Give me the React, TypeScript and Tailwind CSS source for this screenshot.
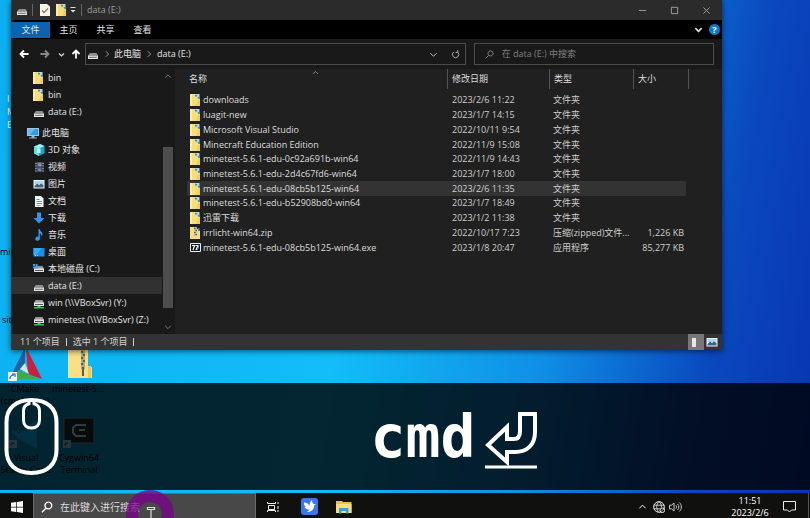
import React from "react";

type IconProps = { className?: string };

const Drive = ({ net, sys }: { net?: boolean; sys?: boolean }) => (
  <svg viewBox="0 0 12 12" className="h-3 w-3 shrink-0" aria-hidden="true">
    {net || sys ? (
      <>
        <path d="M2.5 3h7L11 6H1z" fill="#9a9a9a" />
        <path d="M1 5.5h10V9H1z" fill="#e4e4e4" />
        <path d="M2 7h8v1H2z" fill="#555" />
        {net && <path d="M4.5 9h3v1H11v1.5H1V10h3.5z" fill="#3fc451" />}
        {sys && <path d="M0 1h2v2H0zM2.6 1h2v2h-2zM0 3.6h2v2H0zM2.6 3.6h2v2h-2z" fill="#2ba9f0" />}
      </>
    ) : (
      <>
        <path d="M3 5h6.5L11 7.5H1z" fill="#8d8d8d" />
        <path d="M1 7.5h10V11H1z" fill="#e6e6e6" />
        <path d="M2 8.8h8v1H2z" fill="#666" />
        <path d="M9 9h1.3v1H9z" fill="#36d05a" />
      </>
    )}
  </svg>
);

const Folder = ({ className = "h-3 w-[10px]" }: IconProps) => (
  <svg viewBox="0 0 10 12" className={`${className} shrink-0`} aria-hidden="true">
    <path d="M0 0h5l5 4v8H0z" fill="#f7de7c" />
    <path d="M0 0h2v12H0z" fill="#fdeea5" />
    <path d="M5 0h4.5v4H8z" fill="#b9d6e2" />
    <path d="M5 1h2v1.5H5zM7.5 3H10v2H8.500z" fill="#3d8fb8" />
    <path d="M8 6h2v6H6z" fill="#f0cf62" />
  </svg>
);

const ZipFile = () => (
  <svg viewBox="0 0 10 12" className="h-3 w-[10px] shrink-0" aria-hidden="true">
    <path d="M0 0h5l5 4v8H0z" fill="#f7de7c" />
    <path d="M4 0h3v9H4z" fill="#b9b9b0" />
    <path d="M4 1h1.500v1H4zM5.500 3H7v1H5.500zM4 5h1.500v1H4zM5.500 7H7v1H5.500z" fill="#555" />
    <path d="M8 1h1.500v3H8z" fill="#3d8fb8" />
  </svg>
);

const ExeFile = () => (
  <svg viewBox="0 0 11 9" className="h-[9px] w-[11px] shrink-0" aria-hidden="true">
    <path d="M.5.500h10v8H.5z" fill="#171717" stroke="#eee" />
    <path d="M2 2.500h2.500L3 7M5.500 2.500H8L6 7" fill="none" stroke="#fff" strokeWidth="1.200" />
    <path d="m9 2-1.500 5" stroke="#4a9fe0" />
  </svg>
);

const Computer = () => (
  <svg viewBox="0 0 12 12" className="h-3 w-3 shrink-0" aria-hidden="true">
    <path d="M0 1h12v8H0z" fill="#9fc6dc" />
    <path d="M1 2h10v6H1z" fill="#2f9de4" />
    <path d="M1 2h7L3 8H1z" fill="#61bdf2" />
    <path d="M4.500 9h3v1.500H10v1H2v-1h2.500z" fill="#8fb3c8" />
  </svg>
);

const Cube = () => (
  <svg viewBox="0 0 12 12" className="h-3 w-3 shrink-0" aria-hidden="true">
    <path d="M1 2.500 7 0l4.500 2v7L6 12 1 9.500z" fill="#1aa6c9" />
    <path d="M1 2.500 6 4.500V12L1 9.500z" fill="#5be0e8" />
    <path d="M1 2.500 7 0l4.500 2L6 4.500z" fill="#9af0f4" />
    <path d="M4 4.500h3.500V9H4z" fill="#d5f8fa" />
  </svg>
);

const Video = () => (
  <svg viewBox="0 0 12 12" className="h-3 w-3 shrink-0" aria-hidden="true">
    <path d="M2 1h9v10H2z" fill="#3b3b3b" />
    <path d="M2.500 2h1v1h-1zM2.500 4.500h1v1h-1zM2.500 7h1v1h-1zM2.500 9.500h1v1h-1zM9.500 2h1v1h-1zM9.500 4.500h1v1h-1zM9.500 7h1v1h-1zM9.500 9.500h1v1h-1z" fill="#ccc" />
    <path d="M4.500 1.500h4v4h-4z" fill="#6b83c4" />
    <path d="M4.500 6.500h4v4h-4z" fill="#3e6fd0" />
    <path d="m5 5 2-2 1.500 2zM5 9l2-1 1 2z" fill="#d09a5c" />
  </svg>
);

const Picture = () => (
  <svg viewBox="0 0 12 12" className="h-3 w-3 shrink-0" aria-hidden="true">
    <path d="M.5 2h11v8.500H.5z" fill="#f1f5f8" />
    <path d="M1.500 3h9v3h-9z" fill="#a8d8f4" />
    <path d="M1.500 8 4 5.500 6 7l2-1.500L10.500 7v2.500h-9z" fill="#3a6680" />
  </svg>
);

const Doc = () => (
  <svg viewBox="0 0 12 12" className="h-3 w-3 shrink-0" aria-hidden="true">
    <path d="M2 1h6l2.500 2.500V12H2z" fill="#f3f6f8" />
    <path d="M3.500 4h3v1h-3zM3.500 6h5.500v1H3.500zM3.500 8h5.500v1H3.500zM3.500 10h4v.8h-4z" fill="#4b9cc8" />
  </svg>
);

const Download = () => (
  <svg viewBox="0 0 12 12" className="h-3 w-3 shrink-0" aria-hidden="true">
    <path d="M4 .5h4V6h3.500L6 11.500.5 6H4z" fill="#3492ef" />
  </svg>
);

const Music = () => (
  <svg viewBox="0 0 12 12" className="h-3 w-3 shrink-0" aria-hidden="true">
    <path d="M5.500 0h1.200c.3 2.500 3 3 2.800 5.500-.1 1-.5 1.500-1 2 .3-2-.5-2.700-1.600-3V9.500a2.300 2 0 1 1-1.400-1.700z" fill="#2b9cf2" />
  </svg>
);

const DesktopIcon = () => (
  <svg viewBox="0 0 12 12" className="h-3 w-3 shrink-0" aria-hidden="true">
    <path d="M.5 2h11v8.500H.5z" fill="#1b8fe8" />
    <path d="M.5 2h8l-5 7h-3z" fill="#35a8f5" />
    <path d="M2 9h1v.8H2zM4 9h1v.8H4z" fill="#cfe9fb" />
  </svg>
);

type ChevronProps = { d: string; className?: string; bold?: boolean };
const Stroke = ({ d, className = "h-[9px] w-[9px]", bold }: ChevronProps) => (
  <svg viewBox="0 0 10 10" className={`${className} shrink-0`} fill="none" stroke="currentColor" strokeWidth={bold ? 1.8 : 1.1} aria-hidden="true">
    <path d={d} />
  </svg>
);

const UP = "M1.500 7 5 3.500 8.500 7";
const DOWN = "M1.500 3.500 5 7l3.500-3.500";
const RIGHT = "M3.500 1.500 7 5 3.500 8.500";

const quickAccess = [
  { label: "bin", icon: <Folder /> },
  { label: "bin", icon: <Folder /> },
  { label: "data (E:)", icon: <Drive /> },
];

const places = [
  { label: "3D 对象", icon: <Cube /> },
  { label: "视频", icon: <Video /> },
  { label: "图片", icon: <Picture /> },
  { label: "文档", icon: <Doc /> },
  { label: "下载", icon: <Download /> },
  { label: "音乐", icon: <Music /> },
  { label: "桌面", icon: <DesktopIcon /> },
  { label: "本地磁盘 (C:)", icon: <Drive sys /> },
  { label: "data (E:)", icon: <Drive />, active: true },
  { label: "win (\\\\VBoxSvr) (Y:)", icon: <Drive net /> },
  { label: "minetest (\\\\VBoxSvr) (Z:)", icon: <Drive net /> },
];

const files = [
  ["downloads", "2023/2/6 11:22", "文件夹", ""],
  ["luagit-new", "2023/1/7 14:15", "文件夹", ""],
  ["Microsoft Visual Studio", "2022/10/11 9:54", "文件夹", ""],
  ["Minecraft Education Edition", "2022/11/9 15:08", "文件夹", ""],
  ["minetest-5.6.1-edu-0c92a691b-win64", "2022/11/9 14:43", "文件夹", ""],
  ["minetest-5.6.1-edu-2d4c67fd6-win64", "2023/1/7 18:00", "文件夹", ""],
  ["minetest-5.6.1-edu-08cb5b125-win64", "2023/2/6 11:35", "文件夹", ""],
  ["minetest-5.6.1-edu-b52908bd0-win64", "2023/1/7 18:49", "文件夹", ""],
  ["迅雷下载", "2023/1/2 11:38", "文件夹", ""],
  ["irrlicht-win64.zip", "2022/10/17 7:23", "压缩(zipped)文件...", "1,226 KB"],
  ["minetest-5.6.1-edu-08cb5b125-win64.exe", "2023/1/8 20:47", "应用程序", "85,277 KB"],
];

const fileIcon = (name: string) =>
  name.endsWith(".zip") ? <ZipFile /> : name.endsWith(".exe") ? <ExeFile /> : <Folder />;

function TitleBar() {
  return (
    <header className="flex h-5 items-center bg-[#2b2b2b] pl-[5px] text-[#9b9b9b]">
      <Drive />
      <span className="ml-1 h-3 w-px bg-[#666]" />
      <button aria-label="属性" className="ml-[7px]">
        <svg viewBox="0 0 10 12" className="h-3 w-[10px]">
          <path d="M0 0h7l3 2.500V12H0z" fill="#f4f4ee" />
          <path d="m2 6.500 2 2 4-4" fill="none" stroke="#8d7d42" strokeWidth="1.300" />
        </svg>
      </button>
      <button aria-label="新建文件夹" className="ml-[6px]">
        <Folder />
      </button>
      <button aria-label="自定义快速访问工具栏" className="ml-[3px] text-[#ddd]">
        <svg viewBox="0 0 8 8" className="h-2 w-2">
          <path d="M1.500 1h5v1h-5zM1.500 4h5L4 6.500z" fill="currentColor" />
        </svg>
      </button>
      <span className="ml-1 h-3 w-px bg-[#666]" />
      <h1 className="ml-[5px]">data (E:)</h1>
      <div className="ml-auto flex">
        <button aria-label="最小化" className="flex w-8 justify-center">
          <Stroke d="M1 5h8" />
        </button>
        <button aria-label="最大化" className="flex w-8 justify-center">
          <Stroke d="M1.500 1.500h7v7h-7z" />
        </button>
        <button aria-label="关闭" className="flex w-8 justify-center">
          <Stroke d="m1.500 1.500 7 7M8.500 1.500l-7 7" />
        </button>
      </div>
    </header>
  );
}

function Ribbon() {
  return (
    <nav className="flex h-[19px] items-center bg-black text-[#e2e2e2]">
      <button className="h-4 w-[39px] bg-[#0d63ad]">文件</button>
      <button className="w-[37px]">主页</button>
      <button className="w-[37px]">共享</button>
      <button className="w-[37px]">查看</button>
      <button aria-label="展开功能区" className="ml-auto">
        <Stroke d={DOWN} bold />
      </button>
      <button aria-label="帮助" className="mr-[2px] ml-[6px] h-[11px] w-[11px] rounded-full bg-[#0f78cf] text-[9px] leading-[11px] font-bold text-white">
        ?
      </button>
    </nav>
  );
}

function AddressBar() {
  return (
    <div className="flex h-[30px] items-center bg-[#191919] pr-2">
      <button aria-label="后退" className="ml-2 text-white">
        <Stroke d="M9.500 5h-8M5 1.500 1.500 5 5 8.500" bold className="h-[10px] w-[10px]" />
      </button>
      <button aria-label="前进" className="ml-[11px] text-[#888]">
        <Stroke d="M.5 5h8M5 1.500 8.500 5 5 8.500" bold className="h-[10px] w-[10px]" />
      </button>
      <button aria-label="最近浏览的位置" className="ml-2 text-[#ddd]">
        <Stroke d={DOWN} bold className="h-[7px] w-[7px]" />
      </button>
      <button aria-label="上移" className="ml-[6px] text-white">
        <Stroke d="M5 9.500v-8M1.500 5 5 1.500 8.500 5" bold className="h-[10px] w-[10px]" />
      </button>
      <div className="ml-1 flex h-[22px] min-w-0 flex-[31] items-center border border-[#4b4b4b] pr-[5px] pl-px text-[#e4e4e4]">
        <Drive />
        <span className="mr-[3px] ml-1 flex text-[#aaa]">
          <Stroke d={RIGHT} className="h-2 w-2" />
        </span>
        <button>此电脑</button>
        <span className="mx-1 flex text-[#aaa]">
          <Stroke d={RIGHT} className="h-2 w-2" />
        </span>
        <button>data (E:)</button>
        <button aria-label="以前的位置" className="ml-auto text-[#bbb]">
          <Stroke d={DOWN} />
        </button>
        <button aria-label="刷新" className="ml-[13px] text-[#aaa]">
          <Stroke d="M7.500 2.500A3.500 3.500 0 1 1 3 2.200M7.500 0v2.700H5" />
        </button>
      </div>
      <label className="ml-2 flex h-[22px] min-w-0 flex-[19] items-center border border-[#4b4b4b] pl-[10px] text-[#8a8a8a]">
        <Stroke d="M6.200 1a2.800 2.800 0 1 1-.1 0M4.200 5.900.8 9.300" />
        <input aria-label="搜索" placeholder="在 data (E:) 中搜索" className="ml-2 min-w-0 flex-1 bg-transparent outline-none placeholder:text-[#808080]" />
      </label>
    </div>
  );
}

function Sidebar() {
  return (
    <aside className="flex w-[164px] shrink-0 bg-[#191919] text-[#e6e6e6]">
      <ul className="min-w-0 flex-1">
        {quickAccess.map((q, i) => (
          <li key={i} className="flex h-[17px] items-center pl-[22px]">
            <span className="flex w-[15px]">{q.icon}</span>
            {q.label}
          </li>
        ))}
        <li className="mt-1 flex h-[17px] items-center pl-4">
          <span className="flex w-[15px]">
            <Computer />
          </span>
          此电脑
        </li>
        {places.map((p) => (
          <li key={p.label} className={`flex h-[17px] items-center pl-[22px] ${p.active ? "bg-[#313131]" : ""}`}>
            <span className="flex w-[15px]">{p.icon}</span>
            <span className="whitespace-nowrap">{p.label}</span>
          </li>
        ))}
      </ul>
      <div className="mr-px flex w-3 flex-col items-center text-[#888]">
        <span className="flex h-[78px] items-start pt-[3px]">
          <Stroke d={UP} className="h-2 w-2" />
        </span>
        <span className="w-[10px] flex-1 bg-[#4d4d4d]" />
        <span className="flex h-[26px] items-end pb-[3px]">
          <Stroke d={DOWN} className="h-2 w-2" />
        </span>
      </div>
    </aside>
  );
}

function FileTable() {
  return (
    <main className="relative min-w-0 flex-1 bg-[#202020] pr-[33px] pl-3 text-[#dedede]">
      <span className="absolute top-0 left-[137px] text-[#aaa]">
        <Stroke d={UP} className="h-[7px] w-[7px]" />
      </span>
      <table className="h-[186px] w-full table-fixed border-collapse text-left whitespace-nowrap">
        <colgroup>
          <col />
          <col className="w-[102px]" />
          <col className="w-[84px]" />
          <col className="w-[53px]" />
          <col className="w-[3px]" />
        </colgroup>
        <thead>
          <tr className="h-6 align-top">
            {["名称", "修改日期", "类型", "大小"].map((h, i) => (
              <th key={h} className="p-0 font-normal">
                <div className={`h-5 leading-5 ${i === 0 ? "pl-[2px]" : "border-l border-[#555] pl-1"}`}>{h}</div>
              </th>
            ))}
            <td className="p-0">
              <div className="h-5 border-r border-[#555]" />
            </td>
          </tr>
        </thead>
        <tbody>
          {files.map(([name, date, type, size]) => {
            const cell = name.includes("08cb5b125-win64") && !name.endsWith(".exe") ? "bg-[#333] p-0" : "p-0";
            return (
              <tr key={name}>
                <td className={cell}>
                  <div className="flex items-center pl-[3px]">
                    <span className="flex w-[13px]">{fileIcon(name)}</span>
                    {name}
                  </div>
                </td>
                <td className={`${cell} text-[#cfcfcf]`}>
                  <div className="pl-[5px]">{date}</div>
                </td>
                <td className={`${cell} text-[#cfcfcf]`}>
                  <div className="pl-1">{type}</div>
                </td>
                <td className={`${cell} text-right text-[#cfcfcf]`}>
                  <div className="pr-[2px]">{size}</div>
                </td>
              </tr>
            );
          })}
        </tbody>
      </table>
    </main>
  );
}

function StatusBar() {
  return (
    <footer className="flex h-4 items-center bg-[#333] pl-[9px] text-[#d4d4d4]">
      <span>11 个项目</span>
      <span className="mx-[6px] h-2 w-px bg-[#ccc]" />
      <span>选中 1 个项目</span>
      <span className="mx-[6px] h-2 w-px bg-[#ccc]" />
      <button aria-label="详细信息" className="ml-auto flex h-4 w-4 items-center bg-[#777] pl-1">
        <span className="h-[9px] w-1 bg-[#e6e6e6]" />
      </button>
      <button aria-label="大图标" className="mr-1 ml-[2px] flex">
        <Picture />
      </button>
    </footer>
  );
}

function Desktop() {
  const label = "absolute text-center text-[9px] leading-3 text-black";
  return (
    <>
      <div className="absolute top-[92px] left-[7px] text-[9px] leading-[13px] text-white">
        I<br />M<br />E
      </div>
      <div className="absolute top-[245px] left-0 text-[9px] text-black">mi</div>
      <div className="absolute top-[313px] left-[2px] text-[9px] text-black">sit</div>
      <svg viewBox="0 0 34 36" className="absolute top-[345px] left-2 h-9 w-[34px]" aria-hidden="true">
        <path d="M17 2 2 33l15-13z" fill="#1c62a5" />
        <path d="M18 2 34 34 20 29z" fill="#c9203f" />
        <path d="m17 18 4 11-9-5z" fill="#d6e3ec" />
        <path d="m11 25 20 9H4z" fill="#3cac4c" />
        <path d="M0 27h9v9H0z" fill="#f5f5f5" />
        <path d="M2 34c0-3 2-4 4-4M4 29h3v3" fill="none" stroke="#1769b5" strokeWidth="1.200" />
      </svg>
      <svg viewBox="0 0 24 30" className="absolute top-[349px] left-[68px] h-[30px] w-6" aria-hidden="true">
        <path d="M0 0h20v18h4v11H0z" fill="#f9e084" />
        <path d="M20 17h3v12h-3z" fill="#e9c85c" />
        <path d="M13 0h4v20h-4z" fill="#aaa791" />
        <path d="M13 2h2v2h-2zM15 5h2v2h-2zM13 8h2v2h-2zM15 11h2v2h-2zM13 14h2v2h-2zM14 18h2v9h-2z" fill="#5c5c52" />
      </svg>
      <div className={`${label} top-[383px] left-0 w-[50px]`}>
        CMake
        <br />
        (cmake-gui)
      </div>
      <div className={`${label} top-[383px] left-[50px] w-[56px]`}>minetest-5...</div>
      <div className={`${label} top-[452px] left-0 w-[52px] whitespace-nowrap`}>
        Visual
        <br />
        Studio Code
      </div>
      <div className={`${label} top-[452px] left-[54px] w-[50px]`}>
        Cygwin64
        <br />
        Terminal
      </div>
    </>
  );
}

function DimmedIcons() {
  return (
    <svg viewBox="0 0 100 40" className="absolute top-[34px] left-0 h-10 w-[100px]" aria-hidden="true">
      <path d="m37 2-18 15-6-4-2 2 8 7 18 10z" fill="#042f42" />
      <path d="M64 1h30v25H64z" fill="#080a0b" stroke="#18292d" />
      <path d="M86 8H76l-3 3v5l3 3h10M79 13h6" fill="none" stroke="#28413f" strokeWidth="2" />
      <path d="M9 23h8v8H9zM63 23h8v8h-8z" fill="#26353a" />
      <path d="M11 29c0-3 1-3 3-3M65 29c0-3 1-3 3-3" fill="none" stroke="#091b22" strokeWidth="1.500" />
    </svg>
  );
}

function KeyOverlay() {
  return (
    <section className="absolute inset-x-0 top-[383px] flex h-[107px] items-center overflow-hidden bg-black/80">
      <DimmedIcons />
      <svg viewBox="0 0 56 78" className="absolute top-[15px] left-1 h-[78px] w-14" fill="none" stroke="#fff" strokeWidth="4" aria-hidden="true">
        <path d="M27.500 2C12 2 2.500 10 2.500 24v28c0 14 9 23 25 23s25-9 25-23V24c0-14-9.500-22-25-22z" />
        <path d="M25 2.500v3.200c-4 1-5.500 4-5.500 7.300v9c0 5 3 8 8 8s8-3 8-8v-9c0-3.300-1.500-6.300-5.500-7.300V2.500" strokeWidth="3" />
      </svg>
      <div className="flex w-full items-center justify-center pl-[98px] text-white">
        <span className="font-['DejaVu_Sans_Mono',monospace] text-[58px] leading-[60px] font-bold">cmd</span>
        <svg viewBox="0 0 52 60" className="mt-1 ml-[10px] h-[60px] w-[52px]" fill="none" stroke="currentColor" strokeWidth="4" role="img" aria-label="Enter">
          <path d="M35 5h15v18c0 13-8 20-20 20h-8v10L3 36l19-18v12h7c4 0 6-3 6-8z" />
          <path d="M0 58h52" strokeWidth="3" />
        </svg>
      </div>
    </section>
  );
}

function Taskbar() {
  return (
    <footer className="absolute inset-x-0 bottom-0 h-[25px] bg-[#10100f] text-white">
      <div className="flex h-[25px] items-center">
        <button aria-label="开始" className="flex w-[33px] justify-center pt-[2px]">
          <svg viewBox="0 0 12 12" className="h-3 w-3">
            <path d="m0 1.800 5.300-.8v4.700H0zM6 .9 12 0v5.700H6zM0 6.400h5.300V11L0 10.300zM6 6.400h6V12l-6-.9z" fill="#fff" />
          </svg>
        </button>
        <label className="flex h-full w-[223px] items-center border border-b-0 border-[#6a6a6a] bg-[#484848] pt-[2px] pl-[7px]">
          <Stroke d="M6.200 1a2.800 2.800 0 1 1-.1 0M4.200 5.900.8 9.300" className="h-3 w-3" />
          <input aria-label="搜索" placeholder="在此键入进行搜索" className="ml-[7px] min-w-0 flex-1 bg-transparent text-[10px] outline-none placeholder:text-[#dcdcdc]" />
        </label>
        <div className="flex flex-1 items-center pt-[2px]">
          <button aria-label="任务视图" className="ml-[11px]">
            <svg viewBox="0 0 12 12" className="h-3 w-3" fill="none" stroke="#eee">
              <path d="M.5 1v1.500h8V1M.5 11V9.500h8V11M1.500 4.500h6v4h-6zM11 1v2M11 5v3M11 9v2" />
            </svg>
          </button>
          <button aria-label="迅雷" className="ml-[22px]">
            <svg viewBox="0 0 17 17" className="h-[17px] w-[17px]">
              <rect width="17" height="17" rx="3" fill="#3a78ea" />
              <path d="M3 4.500C6 4.500 7.500 6 8.500 8c-.3-2 .5-4 2.500-6 0 1.800.5 3 1.500 4l2.500.3-1.800 1.200c-.2 4-2.700 6.500-7.700 6.500 1.800-.8 2.600-1.500 3-2.500C5.500 11.500 4 10.500 3.500 9L5 9C3.500 7.800 2.800 6.500 3 4.500z" fill="#fff" />
            </svg>
          </button>
          <button aria-label="文件资源管理器" className="ml-[18px]">
            <svg viewBox="0 0 16 14" className="h-[14px] w-4">
              <path d="M0 1h6l1 1h8.500v11H0z" fill="#e9bd4f" />
              <path d="M0 4h15.500v9H0z" fill="#fbdc79" />
              <path d="M3 13.500V8h9.500v5.500H10V11H5.500v2.500z" fill="#3b9ddd" />
            </svg>
          </button>
          <div className="ml-auto flex items-center">
            <button aria-label="显示隐藏的图标">
              <Stroke d={UP} />
            </button>
            <svg viewBox="0 0 12 12" className="ml-[6px] h-3 w-3" fill="none" stroke="#eee" role="img" aria-label="网络">
              <circle cx="6" cy="6" r="5.300" />
              <path d="M.7 4.200h10.600M.7 7.800H7M6 .7C3 3 3 9 6 11.300M6 .7c2 1.500 2.500 3.500 2.300 6" strokeWidth=".8" />
              <circle cx="9.300" cy="9.300" r="2.300" fill="#10100f" />
              <path d="m7.800 10.800 3-3" strokeWidth=".8" />
            </svg>
            <svg viewBox="0 0 13 12" className="ml-1 h-3 w-[13px]" fill="none" stroke="#ddd" role="img" aria-label="音量">
              <path d="M.5 4.200h2L5 2v8L2.500 7.800h-2zM6.800 4.300c1 1 1 2.400 0 3.400M8.600 3c1.700 1.600 1.700 4.400 0 6M10.400 1.500c2.600 2.500 2.600 6.500 0 9" strokeWidth=".9" />
            </svg>
            <time className="ml-[46px] w-[44px] text-center leading-3">
              11:51
              <br />
              2023/2/6
            </time>
            <button aria-label="通知" className="ml-[11px]">
              <svg viewBox="0 0 13 13" className="h-[13px] w-[13px]" fill="none" stroke="#eee">
                <path d="M.5 1.500h12v8.500H8.500l-2 2-2-2h-4z" />
              </svg>
            </button>
          </div>
        </div>
        <span className="mr-px ml-3 h-full w-px bg-[#555]" />
      </div>
    </footer>
  );
}

function Pointer() {
  return (
    <svg viewBox="0 0 50 30" className="absolute bottom-0 left-[125px] h-[30px] w-[50px]" aria-hidden="true">
      <circle cx="25" cy="26" r="18" fill="none" stroke="#7a008c" strokeOpacity=".75" strokeWidth="12" />
      <path d="M22.500 19.500h7v2h-7zM26 21v9" fill="none" stroke="#ddd" strokeWidth="1.200" />
    </svg>
  );
}

export default function App() {
  return (
    <div className="relative h-screen overflow-hidden bg-[linear-gradient(100deg,#0cb0f2_0%,#12bdf8_44%,#0f90e6_67%,#0a48be_86%,#0833b0_100%)] font-['Open_Sans','Noto_Sans_CJK_SC',sans-serif] text-[9px] leading-[14px]">
      <Desktop />
      <KeyOverlay />
      <section aria-label="data (E:)" className="absolute top-0 right-[88px] left-[11px] flex flex-col shadow-[0_1px_6px_rgba(0,0,0,0.6)]">
        <TitleBar />
        <Ribbon />
        <AddressBar />
        <div className="flex h-[265px]">
          <Sidebar />
          <FileTable />
        </div>
        <StatusBar />
      </section>
      <Taskbar />
      <Pointer />
    </div>
  );
}
